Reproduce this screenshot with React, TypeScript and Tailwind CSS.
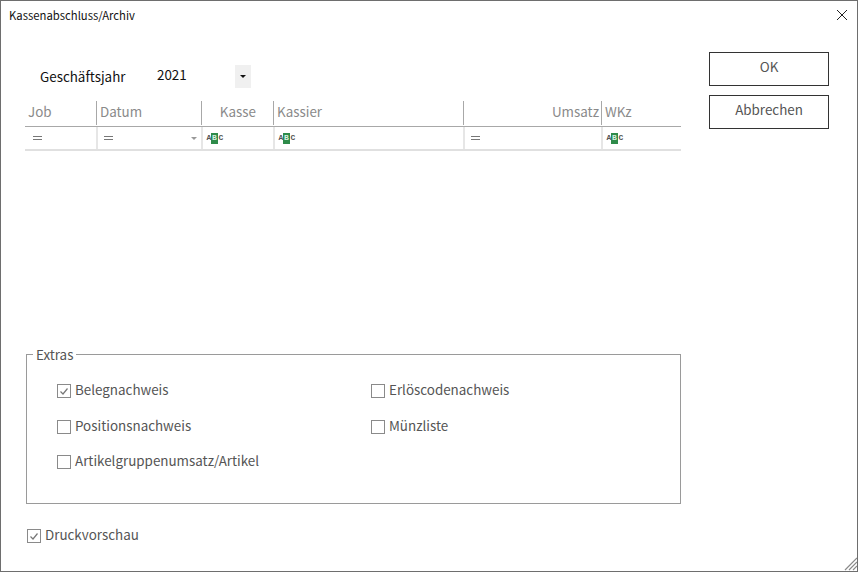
import React from "react";

const columns = [
  { label: "Job", width: "w-[71px]", align: "text-left", filter: "eq" },
  { label: "Datum", width: "w-[105px]", align: "text-left", filter: "eq", arrow: true },
  { label: "Kasse", width: "w-[72px]", align: "text-right", filter: "abc" },
  { label: "Kassier", width: "w-[190px]", align: "text-left", filter: "abc" },
  { label: "Umsatz", width: "w-[138px]", align: "text-right", filter: "eq" },
  { label: "WKz", width: "w-[80px]", align: "text-left", filter: "abc" },
];

const AbcIcon = () => (
  <span className="flex items-center h-[11px] font-['Liberation_Mono',monospace] text-[8px] font-bold leading-none text-[#555555]">
    <span className="w-[4px] flex justify-center">A</span>
    <span className="w-[7px] h-[11px] flex items-center justify-center bg-[#2e8b4a] text-[#d8efe0]">B</span>
    <span className="w-[4px] ml-px flex justify-center">C</span>
  </span>
);

const EqIcon = () => (
  <span className="flex flex-col gap-[2px] w-[9px]">
    <span className="h-px bg-[#777777]" />
    <span className="h-px bg-[#777777]" />
  </span>
);

const CheckBox = ({ label, checked }: { label: string; checked?: boolean }) => (
  <div className="flex items-center gap-[4px] h-[20px]">
    <span className="w-[14px] h-[14px] border border-[#8a8a8a] flex items-center justify-center">
      {checked && (
        <svg width="10" height="10" viewBox="0 0 10 10" fill="none">
          <path d="M1.5 5.5 L4 8 L8.5 2.5" stroke="#777777" strokeWidth="1.2" />
        </svg>
      )}
    </span>
    <span className="text-[13.4px] text-[#555555] leading-none -mt-[2px]">{label}</span>
  </div>
);

export default function App() {
  return (
    <div className="w-[858px] h-[572px] border border-[#6e6e6e] bg-white font-['Noto_Sans_CJK_JP',sans-serif] flex flex-col overflow-hidden">
      {/* title bar */}
      <div className="h-[28px] flex items-center justify-between pl-[8px] pr-[9px] shrink-0">
        <span className="text-[11.3px] text-[#111111]">Kassenabschluss/Archiv</span>
        <svg width="12" height="12" viewBox="0 0 12 12" fill="none">
          <path d="M1 1 L11 11 M11 1 L1 11" stroke="#222222" strokeWidth="1" />
        </svg>
      </div>

      <div className="flex flex-1 min-h-0">
        {/* left side */}
        <div className="w-[708px] pl-[24px] pr-[28px] flex flex-col">
          <div className="flex items-center h-[23px] mt-[36px] text-[13.4px] text-[#111111]">
            <span className="w-[132px] pl-[15px] leading-none">Geschäftsjahr</span>
            <span className="w-[78px] leading-none -mt-[3px]">2021</span>
            <span className="w-[16px] h-[23px] bg-[#f0f0f0] flex items-center justify-center">
              <span className="w-0 h-0 border-x-[3px] border-x-transparent border-t-[3px] border-t-[#111111]" />
            </span>
          </div>

          {/* grid header */}
          <div className="flex h-[26px] mt-[13px] border-b border-[#a8a8a8] text-[13.4px] text-[#8a8a8a]">
            {columns.map((col, i) => (
              <div
                key={col.label}
                className={`${col.width} ${col.align} h-[24px] leading-[20px] px-[3px] ${i > 0 ? "border-l border-[#a8a8a8]" : ""} ${col.align === "text-right" ? "pr-[2px]" : ""}`}
              >
                <span className={col.label === "Kasse" ? "mr-[15px]" : ""}>{col.label}</span>
              </div>
            ))}
          </div>

          {/* filter row */}
          <div className="flex h-[24px] border-b-2 border-[#e0e0e0]">
            {columns.map((col, i) => (
              <div
                key={col.label}
                className={`${col.width} relative flex items-center ${i > 0 ? "border-l-2 border-[#e6e6e6]" : ""} ${col.filter === "eq" ? (i === 0 ? "pl-[8px]" : "pl-[6px]") : "pl-[4px]"}`}
              >
                {col.filter === "eq" ? <EqIcon /> : <AbcIcon />}
                {col.arrow && (
                  <span className="absolute right-[4px] top-[10px] w-0 h-0 border-x-[3px] border-x-transparent border-t-[3px] border-t-[#999999]" />
                )}
              </div>
            ))}
          </div>

          <div className="flex-1" />

          {/* extras group */}
          <fieldset className="border border-[#9a9a9a] h-[158px] ml-[1px] px-[30px] mb-[22px] w-[655px]">
            <legend className="-ml-[24px] px-[3px] text-[13.4px] leading-[16px] text-[#555555]">Extras</legend>
            <div className="flex pt-[19px]">
              <div className="w-[314px] flex flex-col gap-[15.5px]">
                <CheckBox label="Belegnachweis" checked />
                <CheckBox label="Positionsnachweis" />
                <CheckBox label="Artikelgruppenumsatz/Artikel" />
              </div>
              <div className="flex flex-col gap-[15.5px]">
                <CheckBox label="Erlöscodenachweis" />
                <CheckBox label="Münzliste" />
              </div>
            </div>
          </fieldset>

          <div className="ml-[2px] mb-[25px]">
            <CheckBox label="Druckvorschau" checked />
          </div>
        </div>

        {/* buttons */}
        <div className="flex flex-col gap-[9px] pt-[23px]">
          <button className="w-[120px] h-[34px] border border-[#333333] text-[13.4px] text-[#555555] leading-none pb-[4px]">OK</button>
          <button className="w-[120px] h-[34px] border border-[#333333] text-[13.4px] text-[#555555] leading-none pb-[4px]">Abbrechen</button>
        </div>
      </div>

      {/* resize grip */}
      <div className="absolute left-[844px] top-[557px] w-[13px] h-[14px] pointer-events-none">
        <svg width="13" height="14" viewBox="0 0 13 14" fill="none">
          <path d="M1 13 L13 1 M5 13 L13 5 M9 13 L13 9" stroke="#8a8a8a" strokeWidth="1.2" />
        </svg>
      </div>
    </div>
  );
}
